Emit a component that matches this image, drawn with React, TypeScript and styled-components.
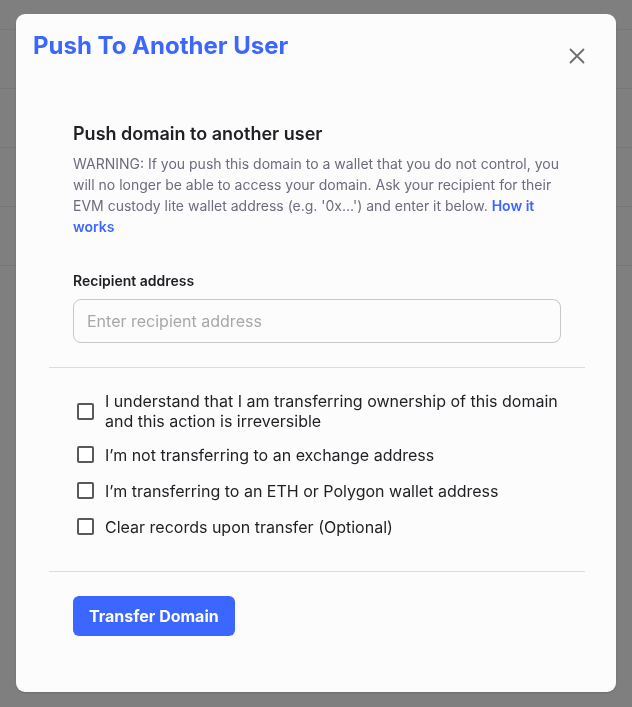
import React from "react";
import styled, { createGlobalStyle } from "styled-components";

const Global = createGlobalStyle`
  html, body { margin: 0; padding: 0; }
  body {
    width: 632px;
    height: 707px;
    overflow: hidden;
    background: #ffffff;
    font-family: Inter, "Noto Sans", sans-serif;
  }
  * { box-sizing: border-box; }
`;

const BackList = styled.div`
  display: flex;
  flex-direction: column;
`;

const BackRow = styled.div<{ $h: number }>`
  height: ${(p) => p.$h}px;
  border-bottom: 1px solid #eeeeee;
`;

const Overlay = styled.div`
  position: fixed;
  inset: 0;
  background: rgba(0, 0, 0, 0.5);
  display: flex;
  align-items: flex-start;
  justify-content: center;
  padding-top: 14px;
`;

const Modal = styled.div`
  width: 600px;
  height: 678px;
  background: #fcfcfc;
  border-radius: 9px;
  box-shadow: 0 1px 2px rgba(0, 0, 0, 0.15);
  padding: 17px 17px 0 17px;
  display: flex;
  flex-direction: column;
`;

const Header = styled.div`
  display: flex;
  justify-content: space-between;
  align-items: flex-start;
`;

const Title = styled.h2`
  margin: 0;
  font-family: Inter, "Noto Sans", sans-serif;
  font-weight: 700;
  font-size: 24px;
  line-height: 30px;
  color: #3b66ff;
`;

const CloseButton = styled.button`
  border: none;
  background: none;
  padding: 0;
  margin: 16.5px 14px 0 0;
  width: 16px;
  height: 16px;
  display: flex;
  align-items: center;
  justify-content: center;
  cursor: pointer;
`;

const Body = styled.div`
  margin: 58.5px 14px 0 16px;
  display: flex;
  flex-direction: column;
`;

const Section = styled.div`
  padding: 0 24px;
  display: flex;
  flex-direction: column;
`;

const Heading = styled.h3`
  margin: 0;
  font-size: 18px;
  font-weight: 600;
  line-height: 24px;
  color: #1f1f24;
`;

const Warning = styled.p`
  margin: 7px 0 0;
  font-size: 14px;
  line-height: 21px;
  color: #6c6c7c;
`;

const Link = styled.a`
  color: #3b66ff;
  font-weight: 600;
  text-decoration: none;
`;

const Label = styled.label`
  margin-top: 35px;
  font-size: 14px;
  font-weight: 600;
  line-height: 18px;
  color: #1f1f24;
`;

const Input = styled.input`
  margin-top: 9px;
  height: 44px;
  width: 100%;
  border: 1px solid #c8c8c8;
  border-radius: 8px;
  background: #fcfcfc;
  padding: 0 13px;
  font-family: Inter, "Noto Sans", sans-serif;
  font-size: 16px;
  color: #222;
  outline: none;
  &::placeholder { color: #a8a8a8; }
`;

const Divider = styled.hr<{ $top: number; $bottom: number }>`
  margin: ${(p) => p.$top}px 0 ${(p) => p.$bottom}px;
  border: none;
  border-top: 1px solid #dcdcdc;
  height: 0;
`;

const Checks = styled.div`
  padding: 0 24px 0 28px;
  display: flex;
  flex-direction: column;
  gap: 11px;
`;

const CheckRow = styled.label`
  display: flex;
  align-items: center;
  gap: 11px;
  min-height: 25px;
  font-size: 16px;
  line-height: 20px;
  color: #1f1f24;
  cursor: pointer;
`;

const Box = styled.span`
  flex: none;
  width: 17px;
  height: 17px;
  border: 2px solid #595959;
  border-radius: 2px;
  background: #fff;
`;

const PrimaryButton = styled.button`
  align-self: flex-start;
  margin-left: 24px;
  height: 40px;
  padding: 0 16px;
  border: none;
  border-radius: 6px;
  background: #3b66ff;
  color: #ffffff;
  font-family: Inter, "Noto Sans", sans-serif;
  font-weight: 700;
  font-size: 16px;
  cursor: pointer;
`;

const checks = [
  "I understand that I am transferring ownership of this domain and this action is irreversible",
  "I’m not transferring to an exchange address",
  "I’m transferring to an ETH or Polygon wallet address",
  "Clear records upon transfer (Optional)",
];

export default function App() {
  return (
    <>
      <Global />
      <BackList>
        <BackRow $h={30} />
        <BackRow $h={59} />
        <BackRow $h={59} />
        <BackRow $h={59} />
        <BackRow $h={59} />
      </BackList>
      <Overlay>
        <Modal>
          <Header>
            <Title>Push To Another User</Title>
            <CloseButton aria-label="Close">
              <svg width="16" height="16" viewBox="0 0 16 16">
                <path d="M1.5 1.5 L14.5 14.5 M14.5 1.5 L1.5 14.5" stroke="#6e6e6e" strokeWidth="1.8" strokeLinecap="round" />
              </svg>
            </CloseButton>
          </Header>
          <Body>
            <Section>
              <Heading>Push domain to another user</Heading>
              <Warning>
                WARNING: If you push this domain to a wallet that you do not control, you will no longer be able to
                access your domain. Ask your recipient for their EVM custody lite wallet address (e.g. '0x...') and
                enter it below. <Link href="#">How it works</Link>
              </Warning>
              <Label htmlFor="recipient">Recipient address</Label>
              <Input id="recipient" placeholder="Enter recipient address" />
            </Section>
            <Divider $top={24} $bottom={23} />
            <Checks>
              {checks.map((c) => (
                <CheckRow key={c}>
                  <Box />
                  <span>{c}</span>
                </CheckRow>
              ))}
            </Checks>
            <Divider $top={32} $bottom={24} />
            <PrimaryButton>Transfer Domain</PrimaryButton>
          </Body>
        </Modal>
      </Overlay>
    </>
  );
}
